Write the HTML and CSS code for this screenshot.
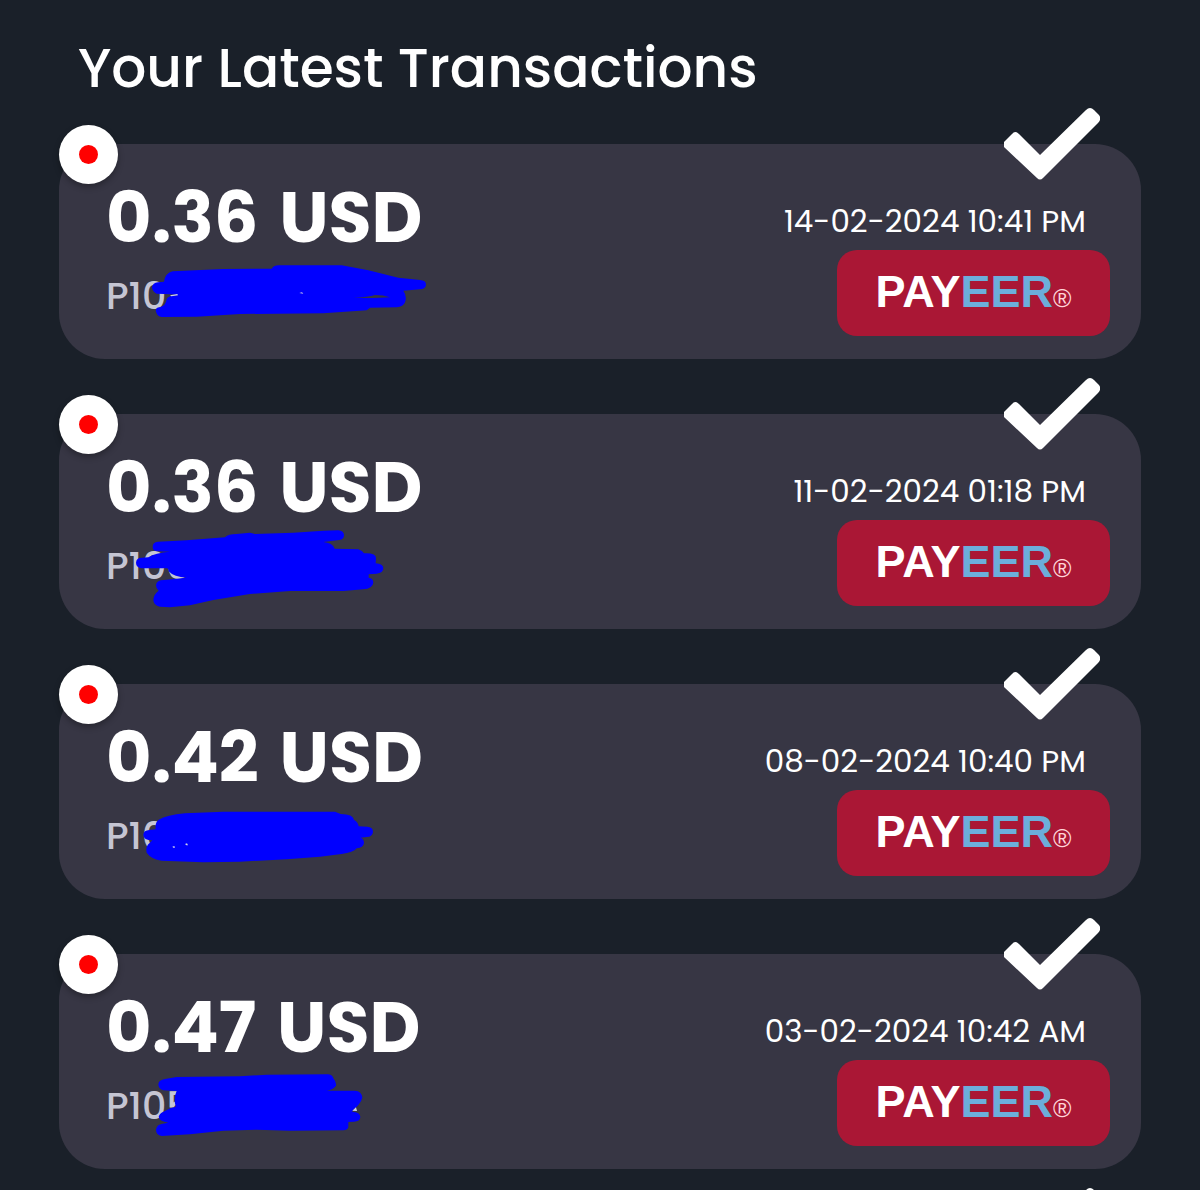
FILE: index.html
```html
<!DOCTYPE html>
<html lang="en">
<head>
<meta charset="utf-8">
<meta name="viewport" content="width=device-width, initial-scale=1">
<title>Your Latest Transactions</title>
<link rel="stylesheet" href="styles.css">
</head>
<body>
<svg class="symbols" aria-hidden="true">
  <symbol id="check" viewBox="0 0 96 72">
    <path fill="#fff" d="M0 34 L8 26 Q11 22 15 26 L36 47 L82 2 Q86 -2 90 2 L95 7 Q98 11 94 15 L39 70 Q36 73 33 70 L0 39 Z"/>
  </symbol>
</svg>
<main class="page">
  <h1 class="title">Your Latest Transactions</h1>
  <div class="list">
    <article class="card">
      <span class="status"></span>
      <svg class="check"><use href="#check"/></svg>
      <div class="payment">
        <strong class="amount">0.36 <span class="unit">USD</span></strong>
        <span class="account">P10</span>
      </div>
      <div class="details">
        <time class="date">14-02-2024 10:41 PM</time>
        <span class="brand"><b class="pay">PAY</b><b class="eer">EER</b><span class="reg">®</span></span>
      </div>
      <svg class="scribble" viewBox="0 0 1050 285">
        <path transform="translate(0 15)" fill-rule="evenodd" d="M186 97 Q188 84 204 82 L222 80 Q226 54 248 49 L400 42 L545 41 Q552 31 566 31 L755 31 L835 46 L925 68 L990 75 Q1008 76 1008 89 Q1007 102 990 103 L940 107 Q952 124 945 142 Q940 156 920 157 L840 158 L830 166 L700 175 L450 177 L320 185 L215 186 Q202 184 198 170 Q195 158 208 157 Q228 153 230 132 Q236 121 262 121 L262 119 Q240 118 222 117 L200 116 Q187 110 186 97 Z M790 129 Q835 126 855 120 Q880 120 900 127 L850 129 Z"/>
        <path class="glint" transform="translate(0 15)" d="M240 121 L262 117 L264 121 L244 124 Z M628 114 L636 112 L640 116 Z"/>
      </svg>
    </article>
    <article class="card">
      <span class="status"></span>
      <svg class="check"><use href="#check"/></svg>
      <div class="payment">
        <strong class="amount">0.36 <span class="unit">USD</span></strong>
        <span class="account">P100</span>
      </div>
      <div class="details">
        <time class="date">11-02-2024 01:18 PM</time>
        <span class="brand"><b class="pay">PAY</b><b class="eer">EER</b><span class="reg">®</span></span>
      </div>
      <svg class="scribble" viewBox="0 0 1050 285">
        <path d="M188 80 Q188 66 204 65 L290 61 L405 52 Q415 42 440 42 L480 38 L495 42 L610 38 L700 32 L745 31 Q762 32 762 46 Q762 58 748 60 L700 66 Q728 68 734 86 L805 88 Q818 92 822 100 Q858 98 858 115 L857 130 Q880 132 880 145 Q880 160 860 161 L836 163 L836 173 Q850 175 850 188 Q848 206 820 208 L760 213 L600 213 L480 222 L370 240 L300 256 L240 262 L210 260 Q190 256 190 239 Q191 223 206 212 Q198 206 198 195 Q200 180 222 180 L290 173 Q252 172 236 154 Q237 148 232 145 L155 145 Q138 142 138 128 Q139 113 155 113 L175 112 Q195 98 240 95 L202 94 Q188 93 188 80 Z"/>
      </svg>
    </article>
    <article class="card">
      <span class="status"></span>
      <svg class="check"><use href="#check"/></svg>
      <div class="payment">
        <strong class="amount">0.42 <span class="unit">USD</span></strong>
        <span class="account">P10</span>
      </div>
      <div class="details">
        <time class="date">08-02-2024 10:40 PM</time>
        <span class="brand"><b class="pay">PAY</b><b class="eer">EER</b><span class="reg">®</span></span>
      </div>
      <svg class="scribble" viewBox="0 0 1050 285">
        <path transform="translate(0 30)" d="M160 104 Q161 91 178 90 L197 88 Q194 68 206 59 Q230 45 285 40 L400 35 L735 35 L752 42 Q790 42 792 60 Q804 65 806 79 L832 80 Q849 82 849 95 Q848 110 830 111 L812 113 Q822 116 822 129 Q820 144 800 145 Q790 158 755 162 L690 170 L590 178 L450 185 L340 187 L215 182 Q184 178 170 158 Q166 140 178 130 L187 121 Q160 121 160 104 Z"/>
        <path class="glint" transform="translate(0 30)" d="M247 140 L253 138 L255 143 L250 143 Z M285 132 L291 130 L294 136 L289 136 Z"/>
      </svg>
    </article>
    <article class="card">
      <span class="status"></span>
      <svg class="check"><use href="#check"/></svg>
      <div class="payment">
        <strong class="amount">0.47 <span class="unit">USD</span></strong>
        <span class="account">P105</span>
      </div>
      <div class="details">
        <time class="date">03-02-2024 10:42 AM</time>
        <span class="brand"><b class="pay">PAY</b><b class="eer">EER</b><span class="reg">®</span></span>
      </div>
      <svg class="scribble" viewBox="0 0 1050 285">
        <path transform="translate(0 15)" d="M205 58 Q206 45 225 42 L260 36 L450 34 L530 29 L715 28 Q728 30 730 40 Q740 52 738 62 Q730 74 710 77 L795 77 Q815 78 817 98 Q812 116 790 134 L786 140 Q811 141 811 156 Q810 170 792 170 L775 171 L775 186 Q774 195 760 196 L600 197 L500 194 L400 197 L300 208 L215 213 Q198 210 198 194 Q200 178 218 176 L235 173 Q207 168 206 155 Q210 143 225 138 Q240 128 257 125 Q250 98 260 78 L220 76 Q205 72 205 58 Z"/>
        <path class="glint" d="M787 152 L798 142 L801 153 Z"/>
      </svg>
    </article>
    <article class="card">
      <svg class="check"><use href="#check"/></svg>
    </article>
  </div>
</main>
</body>
</html>
```
FILE: styles.css
```css
* {
  box-sizing: border-box;
}

body {
  margin: 0;
  height: 100vh;
  overflow: hidden;
  background: #1a2029;
  color: #fff;
  font-family: Poppins, Inter, sans-serif;
}

.symbols {
  display: none;
}

.page {
  padding: 26px 59px 0;
}

.title {
  margin: 0 0 34px;
  padding-left: 19px;
  font-size: 55px;
  line-height: 84px;
  font-weight: 500;
}

.list {
  display: flex;
  flex-direction: column;
  gap: 55px;
}

.card {
  position: relative;
  display: flex;
  justify-content: space-between;
  min-height: 215px;
  padding: 28px 31px 23px 47px;
  border-radius: 46px;
  background: #373644;
}

.status {
  position: absolute;
  top: -19px;
  left: 0;
  display: grid;
  place-items: center;
  width: 59px;
  height: 59px;
  border-radius: 50%;
  background: #fff;
  box-shadow: 0 3px 6px rgba(0, 0, 0, 0.3);
}

.status::before {
  content: "";
  width: 19px;
  height: 19px;
  border-radius: 50%;
  background: #f00;
}

.check {
  position: absolute;
  top: -36px;
  right: 41px;
  width: 96px;
  height: 72px;
}

.payment,
.details {
  display: flex;
  flex-direction: column;
}

.amount {
  font-size: 70px;
  line-height: 92px;
  font-weight: 700;
}

.unit {
  margin-left: 6px;
}

.account {
  font-size: 38px;
  line-height: 64px;
  font-weight: 500;
  color: #c5c5d3;
}

.details {
  align-items: flex-end;
  justify-content: flex-end;
}

.date {
  margin-right: 24px;
  font-size: 31px;
  line-height: 58px;
}

.brand {
  display: flex;
  align-items: baseline;
  justify-content: center;
  width: 273px;
  height: 86px;
  border-radius: 20px;
  background: #aa1735;
  font-family: "Liberation Sans", Arial, sans-serif;
  font-size: 45px;
  line-height: 84px;
}

.eer {
  color: #6caedb;
}

.reg {
  font-size: 25px;
  color: #ffd3d8;
}

.scribble {
  position: absolute;
  top: 106px;
  left: 31px;
  width: 350px;
  height: 95px;
  fill: #00f;
}

.scribble .glint {
  fill: #d0d0e8;
}
```
